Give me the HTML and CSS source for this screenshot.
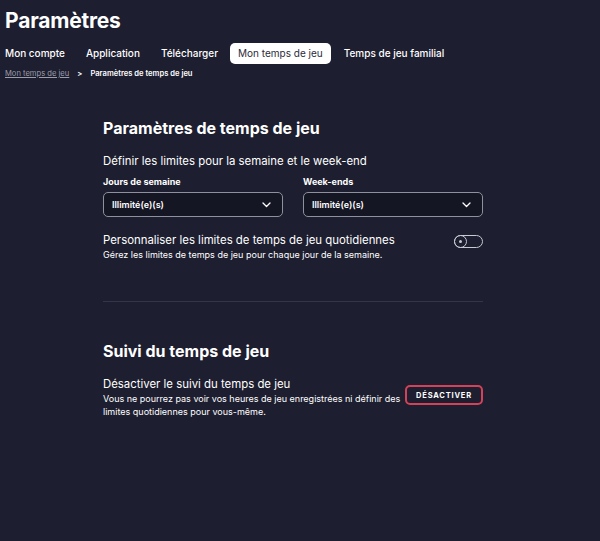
FILE: index.html
```html
<!DOCTYPE html>
<html lang="fr">
<head>
<meta charset="utf-8">
<link rel="stylesheet" href="styles.css">
</head>
<body>
<header class="top">
  <h1 class="title">Paramètres</h1>
  <nav class="tabs">
    <span class="tab">Mon compte</span>
    <span class="tab">Application</span>
    <span class="tab">Télécharger</span>
    <span class="tab active">Mon temps de jeu</span>
    <span class="tab">Temps de jeu familial</span>
  </nav>
  <div class="crumbs">
    <span class="crumb-link">Mon temps de jeu</span>
    <span class="crumb-sep">&gt;</span>
    <span class="crumb-cur">Paramètres de temps de jeu</span>
  </div>
</header>
<main class="content">
  <section class="section first">
    <h2 class="h2">Paramètres de temps de jeu</h2>
    <p class="lead">Définir les limites pour la semaine et le week-end</p>
    <div class="selects">
      <div class="field">
        <div class="label">Jours de semaine</div>
        <div class="select"><span>Illimité(e)(s)</span>
          <svg class="chev" width="9" height="6" viewBox="0 0 9 6"><path d="M1 1l3.5 3.5L8 1" fill="none" stroke="#fff" stroke-width="1.3" stroke-linecap="round" stroke-linejoin="round"/></svg>
        </div>
      </div>
      <div class="field">
        <div class="label">Week-ends</div>
        <div class="select"><span>Illimité(e)(s)</span>
          <svg class="chev" width="9" height="6" viewBox="0 0 9 6"><path d="M1 1l3.5 3.5L8 1" fill="none" stroke="#fff" stroke-width="1.3" stroke-linecap="round" stroke-linejoin="round"/></svg>
        </div>
      </div>
    </div>
    <div class="row">
      <div class="row-text">
        <div class="row-title">Personnaliser les limites de temps de jeu quotidiennes</div>
        <div class="row-sub">Gérez les limites de temps de jeu pour chaque jour de la semaine.</div>
      </div>
      <div class="toggle"><span class="knob"></span></div>
    </div>
  </section>
  <hr class="divider">
  <section class="section second">
    <h2 class="h2">Suivi du temps de jeu</h2>
    <div class="row track">
      <div class="row-text">
        <div class="row-title">Désactiver le suivi du temps de jeu</div>
        <div class="row-sub">Vous ne pourrez pas voir vos heures de jeu enregistrées ni définir des limites quotidiennes pour vous-même.</div>
      </div>
      <button class="btn">DÉSACTIVER</button>
    </div>
  </section>
</main>
</body>
</html>
```
FILE: styles.css
```css
* { box-sizing: border-box; }
html, body { margin: 0; padding: 0; }
body {
  background: #1d1e2f;
  color: #fff;
  font-family: Inter, "Noto Sans", sans-serif;
  width: 600px;
  height: 541px;
  overflow: hidden;
}
.top { padding: 8px 0 0 5px; }
.title {
  margin: 0;
  font-size: 21px;
  font-weight: 700;
  line-height: 26px;
  letter-spacing: -0.2px;
}
.tabs {
  display: flex;
  align-items: center;
  margin-top: 9px;
}
.tab {
  font-size: 10px;
  font-weight: 500;
  line-height: 13px;
  margin-right: 21px;
}
.tab:nth-child(3) { margin-right: 12px; }
.tab.active {
  background: #fff;
  color: #2a2b3a;
  font-weight: 400;
  padding: 4px 8px;
  border-radius: 5px;
  margin-right: 13px;
  height: 21px;
}
.crumbs {
  display: flex;
  align-items: center;
  gap: 7px;
  margin-top: 4px;
  font-size: 7.6px;
  line-height: 12px;
}
.crumb-link { color: #9c9dab; text-decoration: underline; }
.crumb-sep { color: #fff; font-weight: 600; margin: 0 1px; }
.crumb-cur { font-weight: 600; }

.content { width: 380px; margin: 37px 0 0 103px; }
.h2 {
  margin: 0;
  font-size: 16px;
  font-weight: 700;
  line-height: 22px;
}
.lead { margin: 14px 0 0; font-size: 11.4px; line-height: 16px; font-weight: 400; }
.selects { display: flex; gap: 20px; margin-top: 7px; }
.field { flex: 1; }
.label { font-size: 9px; font-weight: 700; line-height: 12px; }
.select {
  margin-top: 4px;
  height: 25px;
  border: 1px solid #8f909e;
  border-radius: 5px;
  background: #151624;
  display: flex;
  align-items: center;
  justify-content: space-between;
  padding: 0 11px 0 8px;
  font-size: 9px;
  font-weight: 600;
}
.chev { display: block; }
.row { display: flex; justify-content: space-between; align-items: flex-start; }
.first .row { margin-top: 16px; }
.row-title { font-size: 11.4px; line-height: 15px; }
.row-sub { font-size: 9px; line-height: 13px; }
.toggle {
  width: 29px;
  height: 13px;
  border: 1.3px solid #c8c9d2;
  border-radius: 7px;
  margin-top: 2px;
  display: flex;
  align-items: center;
}
.knob {
  width: 13px;
  height: 13px;
  border: 1.3px solid #c8c9d2;
  border-radius: 50%;
  margin-left: -1.3px;
  display: flex;
  align-items: center;
  justify-content: center;
}
.knob::after {
  content: "";
  width: 3px;
  height: 3px;
  border-radius: 50%;
  background: #c8c9d2;
}
.divider {
  border: 0;
  border-top: 1px solid #34354a;
  margin: 40px 0 0;
}
.second { padding-top: 38px; }
.track { margin-top: 15px; }
.track .row-text { width: 302px; }
.btn {
  margin-top: 8px;
  background: transparent;
  color: #fff;
  border: 2px solid #d34258;
  border-radius: 5px;
  width: 78px;
  height: 20px;
  font-family: inherit;
  font-size: 7.5px;
  font-weight: 700;
  letter-spacing: 0.8px;
  padding: 0;
}
```
